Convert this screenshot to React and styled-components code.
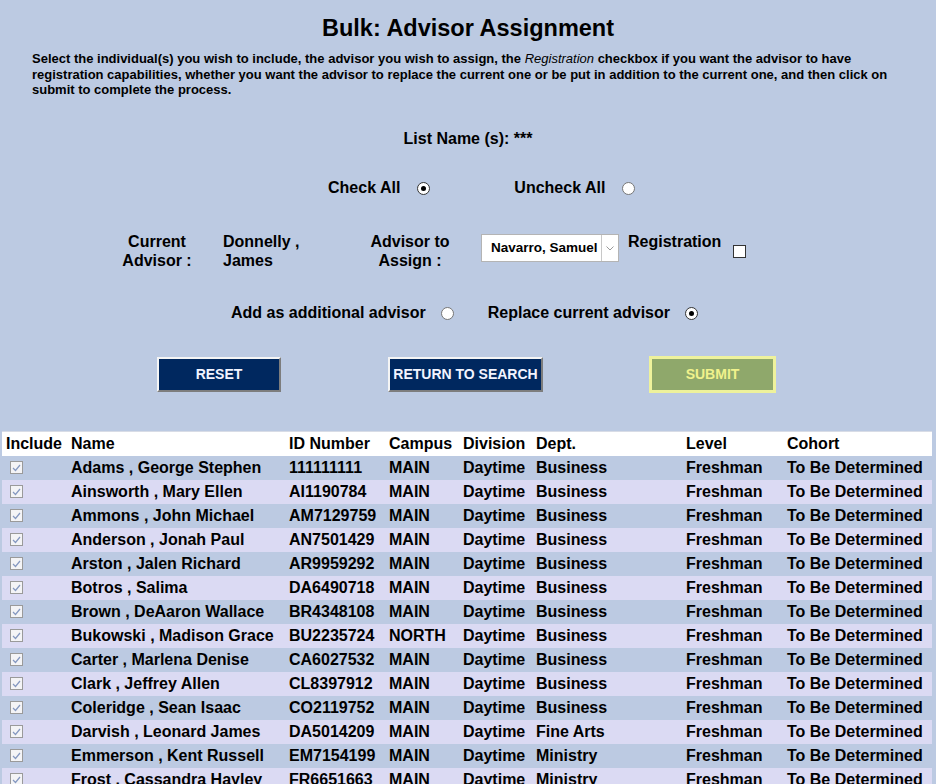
import React from 'react';
import styled, { createGlobalStyle, css } from 'styled-components';

const students = [
  ['Adams , George Stephen', '111111111', 'MAIN', 'Daytime', 'Business'],
  ['Ainsworth , Mary Ellen', 'AI1190784', 'MAIN', 'Daytime', 'Business'],
  ['Ammons , John Michael', 'AM7129759', 'MAIN', 'Daytime', 'Business'],
  ['Anderson , Jonah Paul', 'AN7501429', 'MAIN', 'Daytime', 'Business'],
  ['Arston , Jalen Richard', 'AR9959292', 'MAIN', 'Daytime', 'Business'],
  ['Botros , Salima', 'DA6490718', 'MAIN', 'Daytime', 'Business'],
  ['Brown , DeAaron Wallace', 'BR4348108', 'MAIN', 'Daytime', 'Business'],
  ['Bukowski , Madison Grace', 'BU2235724', 'NORTH', 'Daytime', 'Business'],
  ['Carter , Marlena Denise', 'CA6027532', 'MAIN', 'Daytime', 'Business'],
  ['Clark , Jeffrey Allen', 'CL8397912', 'MAIN', 'Daytime', 'Business'],
  ['Coleridge , Sean Isaac', 'CO2119752', 'MAIN', 'Daytime', 'Business'],
  ['Darvish , Leonard James', 'DA5014209', 'MAIN', 'Daytime', 'Fine Arts'],
  ['Emmerson , Kent Russell', 'EM7154199', 'MAIN', 'Daytime', 'Ministry'],
  ['Frost , Cassandra Hayley', 'FR6651663', 'MAIN', 'Daytime', 'Ministry'],
  ['Garner , Elise Marie', 'GA3381920', 'MAIN', 'Daytime', 'Ministry'],
];

const App = () => {
  return (
    <>
      <GlobalStyle />
      <Page>
        <Title>Bulk: Advisor Assignment</Title>
        <Intro>
          Select the individual(s) you wish to include, the advisor you wish to assign, the{' '}
          <em>Registration</em> checkbox if you want the advisor to have registration capabilities,
          whether you want the advisor to replace the current one or be put in addition to the
          current one, and then click on submit to complete the process.
        </Intro>

        <ListName>List Name (s): ***</ListName>

        <OptionRow $left={328}>
          <OptionLabel>Check All</OptionLabel>
          <Radio $checked />
          <OptionLabel $gap={84}>Uncheck All</OptionLabel>
          <Radio />
        </OptionRow>

        <AdvisorRow>
          <CenteredLabel $width={104}>Current Advisor :</CenteredLabel>
          <AdvisorName>Donnelly , James</AdvisorName>
          <CenteredLabel $width={120}>Advisor to Assign :</CenteredLabel>
          <Select>
            <SelectValue>Navarro, Samuel</SelectValue>
            <SelectArrow>
              <svg width="8" height="5" viewBox="0 0 8 5">
                <path d="M0.5 0.5 L4 4 L7.5 0.5" fill="none" stroke="#9a9a9a" strokeWidth="1" />
              </svg>
            </SelectArrow>
          </Select>
          <RegistrationLabel>Registration</RegistrationLabel>
          <Checkbox />
        </AdvisorRow>

        <OptionRow $left={231} $top={33}>
          <OptionLabel $after={15}>Add as additional advisor</OptionLabel>
          <Radio />
          <OptionLabel $gap={34} $after={15}>Replace current advisor</OptionLabel>
          <Radio $checked />
        </OptionRow>

        <ButtonRow>
          <Button $width={124}>RESET</Button>
          <Button $width={155} $gap={107}>RETURN TO SEARCH</Button>
          <Button $width={127} $gap={106} $submit>SUBMIT</Button>
        </ButtonRow>

        <Table>
          <HeaderRow>
            <Cell>Include</Cell>
            <Cell>Name</Cell>
            <Cell>ID Number</Cell>
            <Cell>Campus</Cell>
            <Cell>Division</Cell>
            <Cell>Dept.</Cell>
            <Cell>Level</Cell>
            <Cell>Cohort</Cell>
          </HeaderRow>
          {students.map((s, i) => (
            <Row key={s[1]} $alt={i % 2 === 1}>
              <Cell>
                <RowCheck>
                  <svg width="9" height="8" viewBox="0 0 9 8">
                    <path d="M1 4 L3.5 6.5 L8 1" fill="none" stroke="#8598c0" strokeWidth="1.2" />
                  </svg>
                </RowCheck>
              </Cell>
              <Cell>{s[0]}</Cell>
              <Cell>{s[1]}</Cell>
              <Cell>{s[2]}</Cell>
              <Cell>{s[3]}</Cell>
              <Cell>{s[4]}</Cell>
              <Cell>Freshman</Cell>
              <Cell>To Be Determined</Cell>
            </Row>
          ))}
        </Table>
      </Page>
    </>
  );
};

export default App;

const GlobalStyle = createGlobalStyle`
  html, body {
    margin: 0;
    padding: 0;
    overflow: hidden;
    background-color: #bccae2;
  }
  body {
    font-family: "Liberation Sans", Arial, sans-serif;
    color: #000;
  }
`;

const Page = styled.div`
  width: 936px;
  display: flex;
  flex-direction: column;
  font-weight: bold;
  font-size: 16px;
  line-height: 19px;
`;

const Title = styled.h1`
  margin: 14px 0 0;
  font-size: 23.5px;
  line-height: 28px;
  text-align: center;
`;

const Intro = styled.p`
  margin: 9px 40px 0 32px;
  font-size: 13px;
  line-height: 15.5px;
  em {
    font-weight: normal;
    font-style: italic;
  }
`;

const ListName = styled.div`
  margin-top: 31px;
  text-align: center;
`;

const OptionRow = styled.div`
  display: flex;
  align-items: center;
  margin-top: ${p => p.$top || 30}px;
  padding-left: ${p => p.$left}px;
`;

const OptionLabel = styled.span`
  margin-left: ${p => p.$gap || 0}px;
  margin-right: ${p => p.$after || 17}px;
`;

const Radio = styled.span`
  box-sizing: border-box;
  width: 13px;
  height: 13px;
  border-radius: 50%;
  background: #fff;
  border: 1px solid ${p => (p.$checked ? '#333' : '#767676')};
  display: inline-flex;
  align-items: center;
  justify-content: center;
  margin-top: 2px;
  ${p =>
    p.$checked &&
    css`
      &::after {
        content: '';
        width: 5px;
        height: 5px;
        border-radius: 50%;
        background: #000;
      }
    `}
`;

const AdvisorRow = styled.div`
  display: flex;
  align-items: flex-start;
  margin-top: 35px;
  padding-left: 105px;
`;

const CenteredLabel = styled.div`
  width: ${p => p.$width}px;
  text-align: center;
`;

const AdvisorName = styled.div`
  width: 100px;
  margin-left: 14px;
  margin-right: 27px;
`;

const Select = styled.div`
  box-sizing: border-box;
  display: flex;
  width: 138px;
  height: 28px;
  margin-left: 11px;
  margin-top: 2.5px;
  background: #fff;
  border: 1px solid #b4b4b4;
`;

const SelectValue = styled.div`
  flex: 1;
  padding-left: 9px;
  font-size: 13.5px;
  line-height: 26px;
  white-space: nowrap;
  overflow: hidden;
`;

const SelectArrow = styled.div`
  width: 16px;
  display: flex;
  align-items: center;
  justify-content: center;
  border-left: 1px solid #c8c8c8;
`;

const RegistrationLabel = styled.div`
  margin-left: 9px;
`;

const Checkbox = styled.span`
  box-sizing: border-box;
  width: 13px;
  height: 13px;
  margin-left: 12px;
  margin-top: 13px;
  background: #fff;
  border: 1px solid #333;
`;

const ButtonRow = styled.div`
  display: flex;
  align-items: center;
  margin-top: 34px;
  padding-left: 157px;
`;

const Button = styled.button`
  box-sizing: border-box;
  width: ${p => p.$width}px;
  height: 35px;
  margin-left: ${p => p.$gap || 0}px;
  padding: 0;
  font-family: "Liberation Sans", Arial, sans-serif;
  font-weight: bold;
  font-size: 14px;
  color: #f2f4ff;
  background-color: #00285f;
  border: 2px solid;
  border-color: #f4f4f4 #7d7d7d #7d7d7d #f4f4f4;
  cursor: pointer;
  ${p =>
    p.$submit &&
    css`
      height: 37px;
      color: #f0f28c;
      background-color: #8fa86b;
      border: 3px solid #eef29c;
    `}
`;

const Table = styled.div`
  margin: 38px 4px 0 2px;
  display: flex;
  flex-direction: column;
`;

const columns = '65px 218px 100px 74px 73px 150px 101px 1fr';

const HeaderRow = styled.div`
  display: grid;
  grid-template-columns: ${columns};
  height: 24px;
  line-height: 24px;
  background-color: #fff;
  border-top: 1px solid #d8dce6;
`;

const Row = styled.div`
  display: grid;
  grid-template-columns: ${columns};
  height: 24px;
  line-height: 24px;
  background-color: ${p => (p.$alt ? '#dbdaf3' : '#bccae2')};
`;

const Cell = styled.div`
  padding-left: 4px;
  white-space: nowrap;
  display: flex;
  align-items: center;
`;

const RowCheck = styled.span`
  box-sizing: border-box;
  width: 13px;
  height: 13px;
  margin-left: 4px;
  display: inline-flex;
  align-items: center;
  justify-content: center;
  background: #f4f4f6;
  border: 1px solid #9a9a9a;
`;
